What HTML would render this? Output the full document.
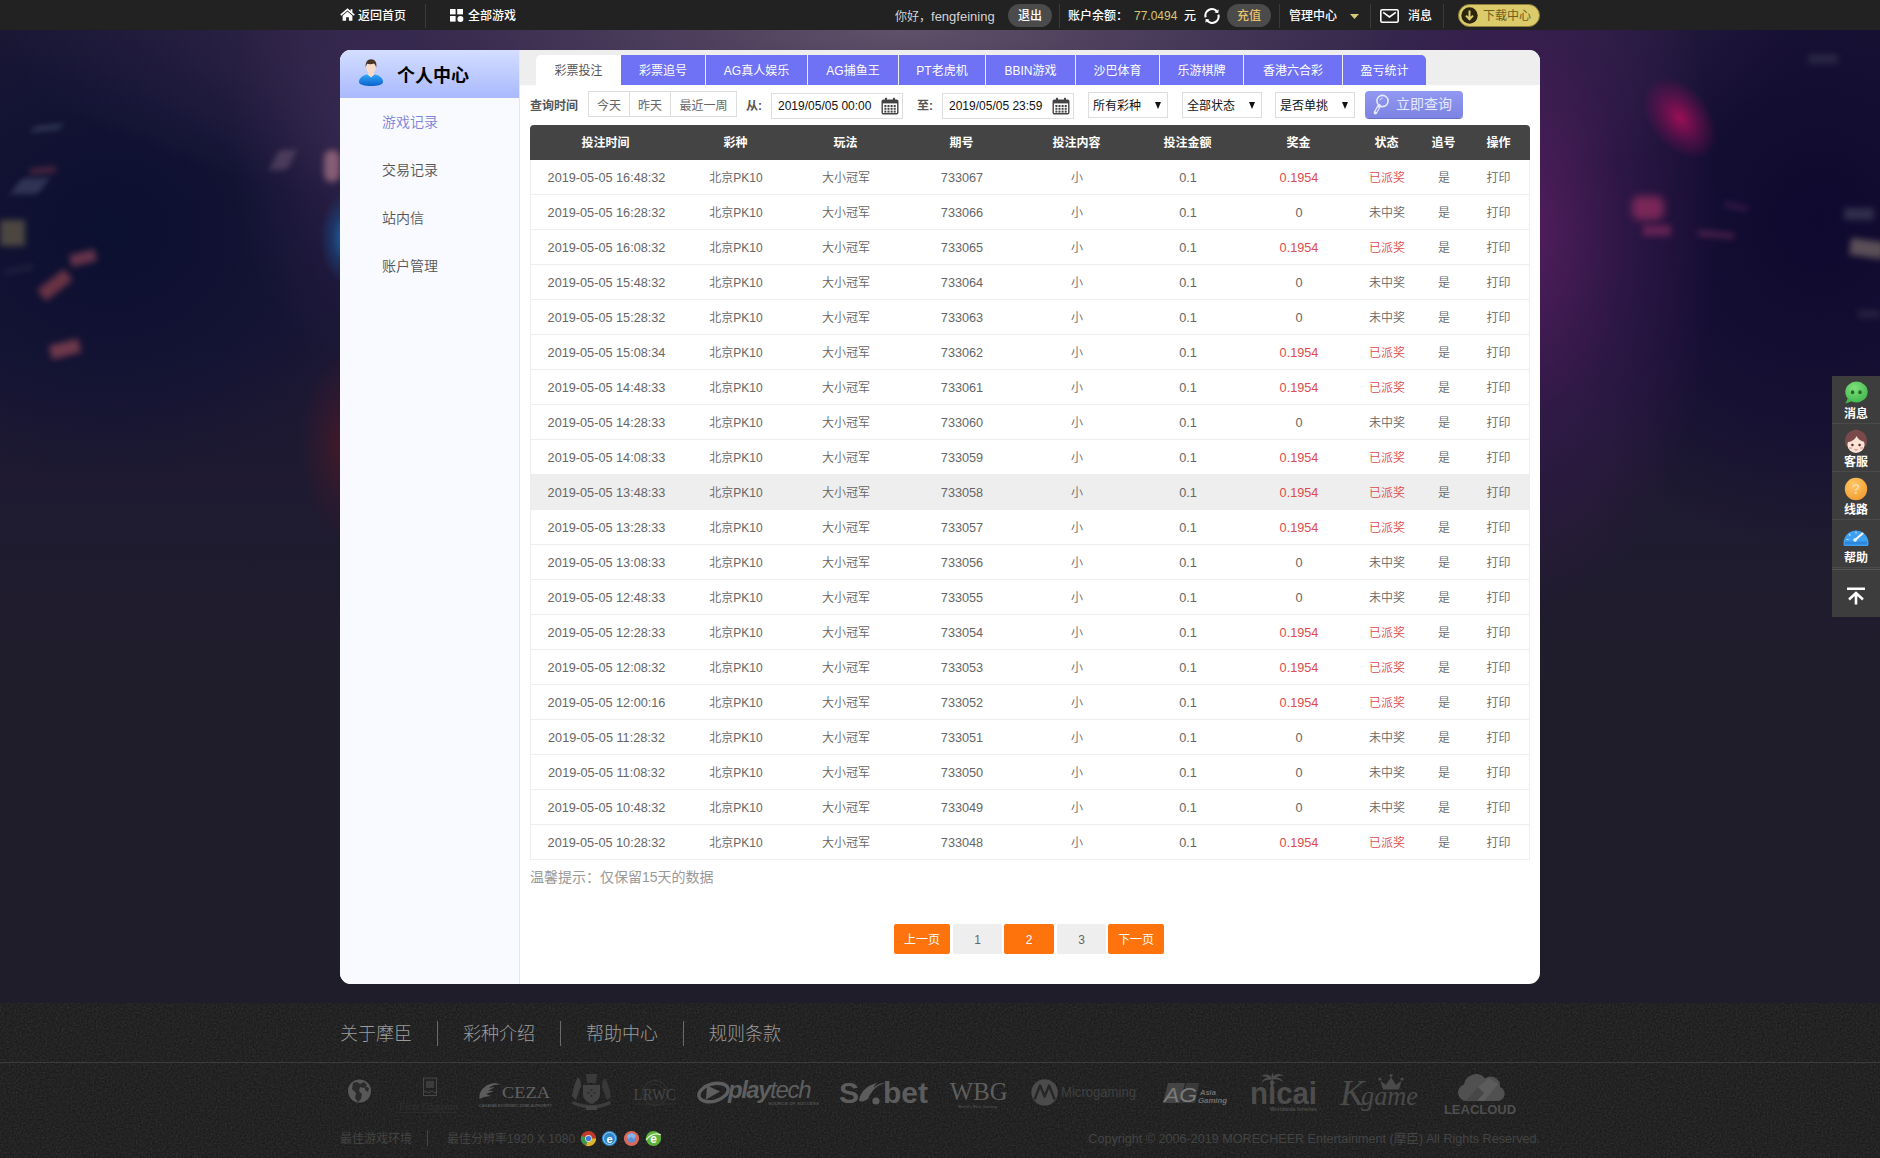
<!DOCTYPE html>
<html lang="zh-CN">
<head>
<meta charset="utf-8">
<title>个人中心</title>
<style>
*{box-sizing:border-box;margin:0;padding:0}
html,body{width:1880px;height:1158px;overflow:hidden}
body{position:relative;background:#201d2b;font-family:"Liberation Sans","Noto Sans CJK SC",sans-serif;font-size:12px;color:#666}
a{text-decoration:none;color:inherit}
ul{list-style:none}
#bg{position:absolute;left:0;top:30px;width:1880px;height:973px;overflow:hidden;
background:
radial-gradient(ellipse 26px 46px at 346px 208px,rgba(30,120,190,.85),rgba(25,90,160,.4) 55%,rgba(20,60,120,0) 100%),
radial-gradient(ellipse 46px 95px at 345px 415px,rgba(85,25,36,.7),rgba(75,25,40,.32) 55%,rgba(60,20,40,0) 100%),

radial-gradient(ellipse 190px 380px at 1530px 200px,rgba(84,30,94,.95),rgba(62,26,84,.55) 50%,rgba(40,20,60,0) 100%),
radial-gradient(ellipse 900px 220px at 900px 0px,rgba(100,84,108,.95),rgba(70,52,94,.55) 55%,rgba(40,30,60,0) 100%),
radial-gradient(ellipse 120px 220px at 350px 110px,rgba(58,42,84,.6),rgba(50,36,78,.3) 55%,rgba(40,30,60,0) 100%),
radial-gradient(ellipse 290px 250px at 110px 200px,rgba(10,15,48,.95),rgba(13,16,50,.55) 60%,rgba(20,20,50,0) 100%),
radial-gradient(ellipse 300px 330px at 1820px 190px,rgba(14,8,46,.95),rgba(18,11,50,.6) 60%,rgba(22,18,50,0) 100%),
linear-gradient(#1d1835 0,#1c1735 300px,#1f1b2f 520px,#201d2b 660px,#201d2b 100%)}
#bg i{position:absolute;display:block;filter:blur(3px);opacity:.6}
#top{position:absolute;left:0;top:0;width:1880px;height:30px;background:#222;color:#fff}
#top .t{position:absolute;top:0;height:30px;line-height:33px;white-space:nowrap;font-size:12px;font-weight:500}
#main{position:absolute;left:340px;top:50px;width:1200px;height:934px;background:#fff;border-radius:11px;overflow:hidden}
#side{position:absolute;left:0;top:0;width:180px;height:934px;background:#f8faff;border-right:1px solid #e4e7f0}
#side .hd{height:48px;background:linear-gradient(#d3deff,#a9b9fd)}
#side .hd b{position:absolute;left:57px;top:13px;font-size:18px;line-height:26px;color:#000;letter-spacing:0}
#side li{position:absolute;left:42px;font-size:14px;line-height:20px;color:#555;font-weight:350}
#side li.on{color:#7b84da}
#content{position:absolute;left:180px;top:0;width:1020px;height:934px}
#tabs{position:absolute;left:0;top:0;width:1020px;height:35px;background:#eee}
#tabs a{position:absolute;top:5px;height:30px;line-height:32px;text-align:center;font-size:12px;color:#fff;background:#6f72f4}
#tabs a.on{background:#fff;color:#555;border-radius:5px 0 0 0}
#tabs a.last{border-radius:0 5px 0 0}
#top .dv{position:absolute;top:4px;width:1px;height:24px;background:#3a3a3a}
#top .pill{position:absolute;top:4px;height:23px;line-height:24px;font-weight:500;border-radius:12px;background:#4b4b4b;text-align:center;font-size:12px}
#top .dl{position:absolute;left:1458px;top:4px;width:82px;height:23px;border-radius:12px;background:#dccb6a;border:1px solid #8d7f3a;color:#6d5f20;font-size:12px;line-height:23px;padding-left:24px;white-space:nowrap}
#flt{position:absolute;left:0;top:35px;width:1020px;height:90px;color:#333}
#flt b{position:absolute;top:6px;height:28px;line-height:31px;font-size:12px;font-weight:700;color:#555;white-space:nowrap}
#flt .grp{position:absolute;left:68px;top:6px;height:26px;border:1px solid #ddd;white-space:nowrap;font-size:0}
#flt .grp span{display:inline-block;height:24px;line-height:29px;vertical-align:top;text-align:center;font-size:12px;color:#666;border-right:1px solid #ddd}
#flt .inp{position:absolute;top:8px;width:132px;height:26px;border:1px solid #ddd;line-height:24px;padding-left:6px;font-size:12px;color:#111;white-space:nowrap}
#flt .inp .cal{position:absolute;right:3px;top:3px}
#flt .sel{position:absolute;top:7px;width:80px;height:26px;border:1px solid #ddd;line-height:26px;padding-left:4px;font-size:12px;color:#111;white-space:nowrap}
#flt .sel i{position:absolute;right:6px;top:9px;border:3.5px solid transparent;border-top:7px solid #111;border-bottom:0}
#flt .btn{position:absolute;left:845px;top:6px;width:98px;height:27px;border-radius:4px;background:linear-gradient(#9299f1,#7d83e2);box-shadow:0 1px 0 #6a6fc8;color:#e6e8ff;font-size:14px;line-height:27px;padding-left:31px;white-space:nowrap}
#tb{position:absolute;left:10px;top:75px;width:1000px;table-layout:fixed;border-collapse:separate;border-spacing:0}
#tb th{height:35px;line-height:33px;padding-top:2px;padding-left:1px;background:#444;color:#fff;font-size:12px;font-weight:bold;text-align:center}
#tb th:first-child{border-radius:4px 0 0 0}
#tb th:last-child{border-radius:0 4px 0 0}
#tb td{font-weight:350;height:35px;line-height:32px;padding-top:2px;border-bottom:1px solid #eee;text-align:center;font-size:12px;color:#666;white-space:nowrap;padding-left:2px}
#tb td.n{font-size:12.7px}
#tb td.r{color:#dd4b4b}
#tb td:first-child{border-left:1px solid #eee}
#tb td:last-child{border-right:1px solid #eee}
#tb tr.hv td{background:#eee}
#hint{position:absolute;left:10px;top:817px;font-size:14px;line-height:20px;color:#999}
#pg a{position:absolute;top:874px;height:30px;line-height:32px;text-align:center;font-size:12px;color:#666;background:#eee;border-radius:2px}
#pg a.o{background:#ff730d;color:#fff}
#footer{position:absolute;left:0;top:1003px;width:1880px;height:155px;background:#161616}
#footer .lk a{position:absolute;top:18px;font-size:18px;line-height:26px;color:#9c9c9c;font-weight:300;white-space:nowrap}
#footer .lk i{position:absolute;top:18px;width:1px;height:25px;background:#6a6a6a}
#footer .hr{position:absolute;left:0;top:59px;width:1880px;height:1px;background:#3b3b3b}
#footer .bt span{position:absolute;top:127px;font-size:12px;line-height:18px;color:#444;white-space:nowrap}
#footer .bt i{position:absolute;top:127px;width:1px;height:16px;background:#444}
#wd{position:absolute;left:1832px;top:376px;width:48px;height:241px;background:#3d3d3d}
#wd .it{position:absolute;left:0;width:48px;height:48px;border-bottom:1px solid #4a4a4a;text-align:center}
#wd .it svg{display:block;margin:5px auto 0}
#wd .it span{position:absolute;left:0;top:29px;width:48px;font-size:12px;line-height:18px;color:#fff;font-weight:bold}
#wd .up{position:absolute;left:0;top:193px;width:48px;height:48px;background:#3d3d3d;border-top:1px solid #555}
#wd .up svg{display:block;margin:17px auto 0}
</style>
</head>
<body>
<svg width="0" height="0" style="position:absolute"><defs><g id="cal"><rect x="1.2" y="3.2" width="15.6" height="13.6" rx="1.2" fill="#fff" stroke="#444" stroke-width="1.4"/><rect x="1.2" y="3.2" width="15.6" height="3.2" fill="#444"/><rect x="4" y="0.8" width="2" height="4.4" rx=".6" fill="#444"/><rect x="12" y="0.8" width="2" height="4.4" rx=".6" fill="#444"/><g fill="#444"><rect x="3.4" y="8" width="2" height="2"/><rect x="6.5" y="8" width="2" height="2"/><rect x="9.6" y="8" width="2" height="2"/><rect x="12.7" y="8" width="2" height="2"/><rect x="3.4" y="10.8" width="2" height="2"/><rect x="6.5" y="10.8" width="2" height="2"/><rect x="9.6" y="10.8" width="2" height="2"/><rect x="12.7" y="10.8" width="2" height="2"/><rect x="3.4" y="13.6" width="2" height="2"/><rect x="6.5" y="13.6" width="2" height="2"/><rect x="9.6" y="13.6" width="2" height="2"/><rect x="12.7" y="13.6" width="2" height="2"/></g></g></defs></svg>
<div id="bg">
<i style="left:1634px;top:50px;width:92px;height:76px;opacity:1;filter:none;transform:rotate(52deg);background:radial-gradient(ellipse 46px 30px at 50% 50%,rgba(165,14,88,.9),rgba(140,15,86,.45) 55%,rgba(110,15,84,0) 100%)"></i>
<i style="left:33px;top:96px;width:28px;height:4px;background:#56667a;transform:skewX(-20deg) rotate(-6deg)"></i>
<i style="left:30px;top:138px;width:26px;height:5px;background:#8a3a4c;transform:rotate(-5deg)"></i>
<i style="left:16px;top:148px;width:28px;height:16px;background:#454b6c;transform:skewX(-35deg)"></i>
<i style="left:0;top:190px;width:25px;height:26px;background:#756a4c;filter:blur(3px)"></i>
<i style="left:70px;top:222px;width:26px;height:12px;background:#a04a5c;transform:rotate(-14deg)"></i>
<i style="left:38px;top:248px;width:34px;height:14px;background:#a54a52;transform:rotate(-38deg)"></i>
<i style="left:4px;top:238px;width:30px;height:3px;background:#3a3a55;transform:rotate(-12deg)"></i>
<i style="left:50px;top:312px;width:30px;height:14px;background:#aa525c;transform:rotate(-14deg)"></i>
<i style="left:274px;top:120px;width:18px;height:20px;background:#65506c;transform:skewX(-25deg)"></i>
<i style="left:324px;top:120px;width:16px;height:32px;background:#c08494;border-radius:8px;filter:blur(3px)"></i>
<i style="left:1632px;top:166px;width:32px;height:24px;background:#b03468;border-radius:8px;filter:blur(4px)"></i>
<i style="left:1643px;top:195px;width:28px;height:11px;background:#8c2c60;filter:blur(3px)"></i>
<i style="left:1698px;top:202px;width:36px;height:5px;background:#7a3062;transform:rotate(5deg)"></i>
<i style="left:1724px;top:174px;width:24px;height:5px;background:#4e2258;transform:rotate(12deg)"></i>
<i style="left:1808px;top:24px;width:30px;height:10px;background:#35344c"></i>
<i style="left:1844px;top:178px;width:30px;height:12px;background:#45465e"></i>
<i style="left:1850px;top:210px;width:34px;height:17px;background:#8c7c72;transform:rotate(8deg);filter:blur(3px)"></i>
<i style="left:1858px;top:280px;width:22px;height:8px;background:#33304a"></i>
</div>
<div id="top">
 <svg style="position:absolute;left:340px;top:8px" width="15" height="13" viewBox="0 0 15 13"><path d="M7.5 0.3 L0.2 6.6 L1.3 7.8 L7.5 2.5 L13.7 7.8 L14.8 6.6 L12.4 4.5 V1.2 H10.6 V3 Z" fill="#fff"/><path d="M7.5 3.6 L2.6 7.8 V12.8 H6.1 V9.2 H8.9 V12.8 H12.4 V7.8 Z" fill="#fff"/></svg>
 <span class="t" style="left:358px">返回首页</span>
 <i class="dv" style="left:425px"></i>
 <svg style="position:absolute;left:450px;top:9px" width="14" height="13" viewBox="0 0 14 13"><rect x="0" y="0" width="5.6" height="5.4" fill="#fff"/><rect x="7.2" y="0" width="5.8" height="5.4" fill="#fff"/><rect x="0" y="7" width="5.6" height="5.6" fill="#fff"/><circle cx="10.4" cy="9.9" r="3" fill="#fff"/></svg>
 <span class="t" style="left:468px">全部游戏</span>
 <span class="t" style="left:895px;color:#d4d4d4;font-weight:400">你好，<span style="font-size:13px">fengfeining</span></span>
 <span class="pill" style="left:1008px;width:44px;color:#fff">退出</span>
 <i class="dv" style="left:1059px"></i>
 <span class="t" style="left:1068px">账户余额：</span>
 <span class="t" style="left:1134px;color:#d9c873">77.0494</span>
 <span class="t" style="left:1184px">元</span>
 <svg style="position:absolute;left:1203px;top:7px" width="18" height="18" viewBox="0 0 16 16" fill="none" stroke="#fff" stroke-width="1.9"><path d="M2.3 9.2 A5.8 5.8 0 0 1 12.6 4.3"/><path d="M13.7 6.8 A5.8 5.8 0 0 1 3.4 11.7"/><path d="M10.2 4.9 L13.6 5.3 L13.9 1.9 Z" fill="#fff" stroke="none"/><path d="M5.8 11.1 L2.4 10.7 L2.1 14.1 Z" fill="#fff" stroke="none"/></svg>
 <span class="pill" style="left:1227px;width:44px;color:#e9c46b">充值</span>
 <i class="dv" style="left:1279px"></i>
 <span class="t" style="left:1289px">管理中心</span>
 <svg style="position:absolute;left:1350px;top:14px" width="9" height="5" viewBox="0 0 9 5"><path d="M0 0H9L4.5 5Z" fill="#d9c873"/></svg>
 <i class="dv" style="left:1370px"></i>
 <svg style="position:absolute;left:1380px;top:9px" width="19" height="14" viewBox="0 0 19 14" fill="none" stroke="#fff" stroke-width="1.6"><rect x="0.8" y="0.8" width="17.4" height="12.4" rx="1.5"/><path d="M3.2 3.4 L9.5 8 L15.8 3.4"/></svg>
 <span class="t" style="left:1408px">消息</span>
 <i class="dv" style="left:1443px"></i>
 <span class="dl"><svg style="position:absolute;left:2px;top:2px" width="17" height="17" viewBox="0 0 17 17"><circle cx="8.5" cy="8.5" r="8.2" fill="#2b2510"/><path d="M8.5 3.6 V11.6 M5 8.6 L8.5 12.2 L12 8.6" fill="none" stroke="#dccb6a" stroke-width="2"/></svg>下载中心</span>
</div>
<div id="main">
 <div id="side">
  <div class="hd"><svg style="position:absolute;left:18px;top:8px" width="26" height="29" viewBox="0 0 26 29"><defs><linearGradient id="bb" x1="0" y1="0" x2="0" y2="1"><stop offset="0" stop-color="#33a6f5"/><stop offset="1" stop-color="#0a62cf"/></linearGradient></defs><path d="M1 24c0-5 5-7 8-7.600h8c3 .600 8 2.600 8 7.600 0 2.600-5.500 4-12 4S1 26.600 1 24z" fill="url(#bb)"/><path d="M9.500 16.400l3.500 3 3.500-3-1-2h-5z" fill="#f6dcc8"/><ellipse cx="13" cy="9.600" rx="4.800" ry="6" fill="#f6dcc8"/><path d="M7.800 9.500c-.800-5 1.600-8.300 5.400-8.300 3.600 0 6 3 5 8.300-.500-2-1.300-3.200-2.200-4-2 .800-5 .800-6.800.300-.700.900-1.100 2-1.400 3.700z" fill="#4a3326"/></svg><b>个人中心</b></div>
  <ul>
   <li class="on" style="top:62px">游戏记录</li>
   <li style="top:110px">交易记录</li>
   <li style="top:158px">站内信</li>
   <li style="top:206px">账户管理</li>
  </ul>
 </div>
 <div id="content">
  <div id="tabs">
   <a class="on" style="left:16px;width:85px">彩票投注</a>
   <a style="left:101px;width:84px">彩票追号</a>
   <a style="left:186px;width:101px">AG真人娱乐</a>
   <a style="left:288px;width:90px">AG捕鱼王</a>
   <a style="left:379px;width:86px">PT老虎机</a>
   <a style="left:466px;width:89px">BBIN游戏</a>
   <a style="left:556px;width:83px">沙巴体育</a>
   <a style="left:640px;width:83px">乐游棋牌</a>
   <a style="left:724px;width:98px">香港六合彩</a>
   <a class="last" style="left:823px;width:83px">盈亏统计</a>
  </div>

  <div id="flt">
   <b style="left:10px">查询时间</b>
   <div class="grp"><span style="width:41px">今天</span><span style="width:41px">昨天</span><span style="width:65px;border-right:0">最近一周</span></div>
   <b style="left:226px">从:</b>
   <div class="inp" style="left:251px">2019/05/05 00:00<svg class="cal" width="18" height="18" viewBox="0 0 18 18"><use href="#cal"/></svg></div>
   <b style="left:397px">至:</b>
   <div class="inp" style="left:422px">2019/05/05 23:59<svg class="cal" width="18" height="18" viewBox="0 0 18 18"><use href="#cal"/></svg></div>
   <div class="sel" style="left:568px">所有彩种<i></i></div>
   <div class="sel" style="left:662px">全部状态<i></i></div>
   <div class="sel" style="left:755px">是否单挑<i></i></div>
   <div class="btn"><svg width="18" height="22" viewBox="0 0 18 22" style="position:absolute;left:7px;top:3px"><circle cx="10.5" cy="7" r="5.6" fill="none" stroke="#e6e8ff" stroke-width="1.6"/><path d="M8 6.2 A3 3 0 0 1 10.5 4.2" fill="none" stroke="#e6e8ff" stroke-width="1"/><path d="M7.2 11.8 L3.4 18.6" stroke="#e6e8ff" stroke-width="3.6" stroke-linecap="round"/><path d="M6.2 13.9 L4.2 17.4" stroke="#8d93ea" stroke-width="1.2" stroke-linecap="round"/></svg>立即查询</div>
  </div>
  <table id="tb" cellspacing="0" cellpadding="0">
   <colgroup><col style="width:150px"><col style="width:110px"><col style="width:110px"><col style="width:122px"><col style="width:108px"><col style="width:114px"><col style="width:108px"><col style="width:68px"><col style="width:46px"><col style="width:64px"></colgroup>
   <thead><tr><th>投注时间</th><th>彩种</th><th>玩法</th><th>期号</th><th>投注内容</th><th>投注金额</th><th>奖金</th><th>状态</th><th>追号</th><th>操作</th></tr></thead>
   <tbody>
<tr><td class="n">2019-05-05 16:48:32</td><td>北京PK10</td><td>大小冠军</td><td class="n">733067</td><td>小</td><td class="n">0.1</td><td class="n r">0.1954</td><td class="r">已派奖</td><td>是</td><td>打印</td></tr>
<tr><td class="n">2019-05-05 16:28:32</td><td>北京PK10</td><td>大小冠军</td><td class="n">733066</td><td>小</td><td class="n">0.1</td><td class="n">0</td><td>未中奖</td><td>是</td><td>打印</td></tr>
<tr><td class="n">2019-05-05 16:08:32</td><td>北京PK10</td><td>大小冠军</td><td class="n">733065</td><td>小</td><td class="n">0.1</td><td class="n r">0.1954</td><td class="r">已派奖</td><td>是</td><td>打印</td></tr>
<tr><td class="n">2019-05-05 15:48:32</td><td>北京PK10</td><td>大小冠军</td><td class="n">733064</td><td>小</td><td class="n">0.1</td><td class="n">0</td><td>未中奖</td><td>是</td><td>打印</td></tr>
<tr><td class="n">2019-05-05 15:28:32</td><td>北京PK10</td><td>大小冠军</td><td class="n">733063</td><td>小</td><td class="n">0.1</td><td class="n">0</td><td>未中奖</td><td>是</td><td>打印</td></tr>
<tr><td class="n">2019-05-05 15:08:34</td><td>北京PK10</td><td>大小冠军</td><td class="n">733062</td><td>小</td><td class="n">0.1</td><td class="n r">0.1954</td><td class="r">已派奖</td><td>是</td><td>打印</td></tr>
<tr><td class="n">2019-05-05 14:48:33</td><td>北京PK10</td><td>大小冠军</td><td class="n">733061</td><td>小</td><td class="n">0.1</td><td class="n r">0.1954</td><td class="r">已派奖</td><td>是</td><td>打印</td></tr>
<tr><td class="n">2019-05-05 14:28:33</td><td>北京PK10</td><td>大小冠军</td><td class="n">733060</td><td>小</td><td class="n">0.1</td><td class="n">0</td><td>未中奖</td><td>是</td><td>打印</td></tr>
<tr><td class="n">2019-05-05 14:08:33</td><td>北京PK10</td><td>大小冠军</td><td class="n">733059</td><td>小</td><td class="n">0.1</td><td class="n r">0.1954</td><td class="r">已派奖</td><td>是</td><td>打印</td></tr>
<tr class="hv"><td class="n">2019-05-05 13:48:33</td><td>北京PK10</td><td>大小冠军</td><td class="n">733058</td><td>小</td><td class="n">0.1</td><td class="n r">0.1954</td><td class="r">已派奖</td><td>是</td><td>打印</td></tr>
<tr><td class="n">2019-05-05 13:28:33</td><td>北京PK10</td><td>大小冠军</td><td class="n">733057</td><td>小</td><td class="n">0.1</td><td class="n r">0.1954</td><td class="r">已派奖</td><td>是</td><td>打印</td></tr>
<tr><td class="n">2019-05-05 13:08:33</td><td>北京PK10</td><td>大小冠军</td><td class="n">733056</td><td>小</td><td class="n">0.1</td><td class="n">0</td><td>未中奖</td><td>是</td><td>打印</td></tr>
<tr><td class="n">2019-05-05 12:48:33</td><td>北京PK10</td><td>大小冠军</td><td class="n">733055</td><td>小</td><td class="n">0.1</td><td class="n">0</td><td>未中奖</td><td>是</td><td>打印</td></tr>
<tr><td class="n">2019-05-05 12:28:33</td><td>北京PK10</td><td>大小冠军</td><td class="n">733054</td><td>小</td><td class="n">0.1</td><td class="n r">0.1954</td><td class="r">已派奖</td><td>是</td><td>打印</td></tr>
<tr><td class="n">2019-05-05 12:08:32</td><td>北京PK10</td><td>大小冠军</td><td class="n">733053</td><td>小</td><td class="n">0.1</td><td class="n r">0.1954</td><td class="r">已派奖</td><td>是</td><td>打印</td></tr>
<tr><td class="n">2019-05-05 12:00:16</td><td>北京PK10</td><td>大小冠军</td><td class="n">733052</td><td>小</td><td class="n">0.1</td><td class="n r">0.1954</td><td class="r">已派奖</td><td>是</td><td>打印</td></tr>
<tr><td class="n">2019-05-05 11:28:32</td><td>北京PK10</td><td>大小冠军</td><td class="n">733051</td><td>小</td><td class="n">0.1</td><td class="n">0</td><td>未中奖</td><td>是</td><td>打印</td></tr>
<tr><td class="n">2019-05-05 11:08:32</td><td>北京PK10</td><td>大小冠军</td><td class="n">733050</td><td>小</td><td class="n">0.1</td><td class="n">0</td><td>未中奖</td><td>是</td><td>打印</td></tr>
<tr><td class="n">2019-05-05 10:48:32</td><td>北京PK10</td><td>大小冠军</td><td class="n">733049</td><td>小</td><td class="n">0.1</td><td class="n">0</td><td>未中奖</td><td>是</td><td>打印</td></tr>
<tr><td class="n">2019-05-05 10:28:32</td><td>北京PK10</td><td>大小冠军</td><td class="n">733048</td><td>小</td><td class="n">0.1</td><td class="n r">0.1954</td><td class="r">已派奖</td><td>是</td><td>打印</td></tr>
   </tbody>
  </table>
  <div id="hint">温馨提示：仅保留15天的数据</div>
  <div id="pg"><a class="o" style="left:374px;width:56px">上一页</a><a style="left:433px;width:49px">1</a><a class="o" style="left:484px;width:50px">2</a><a style="left:537px;width:49px">3</a><a class="o" style="left:588px;width:56px">下一页</a></div>
 </div>
</div>
<div id="wd">
 <div class="it" style="top:0"><svg width="26" height="24" viewBox="0 0 26 24"><defs><radialGradient id="gg" cx=".4" cy=".3" r=".8"><stop offset="0" stop-color="#7fe07a"/><stop offset="1" stop-color="#3db54a"/></radialGradient></defs><ellipse cx="13.5" cy="11" rx="11.2" ry="10.4" fill="url(#gg)"/><path d="M5 17l-2.600 5.400 7-2.400z" fill="#45ba50"/><ellipse cx="9.6" cy="11.2" rx="1.700" ry="2" fill="#1f6a2a"/><ellipse cx="17" cy="11.2" rx="1.700" ry="2" fill="#1f6a2a"/></svg><span>消息</span></div>
 <div class="it" style="top:48px"><svg width="26" height="26" viewBox="0 0 26 26"><path d="M13 1c7 0 11 5 11 11 0 3-1 5-2 6H4c-1-1-2-3-2-6C2 6 6 1 13 1z" fill="#7a4a4a"/><circle cx="13" cy="3.600" r="3" fill="#7a4a4a"/><ellipse cx="13" cy="15.500" rx="8.600" ry="8.400" fill="#fbe3d6"/><path d="M4.600 13c3 0 7-2 9-6 1 3 4 5 8 6-1-6-4-9-8.600-9s-8 3-8.400 9z" fill="#7a4a4a"/><circle cx="9.400" cy="16" r="1.300" fill="#5a3030"/><circle cx="16.600" cy="16" r="1.300" fill="#5a3030"/><ellipse cx="7.400" cy="19" rx="1.800" ry="1.100" fill="#f5a9a0"/><ellipse cx="18.600" cy="19" rx="1.800" ry="1.100" fill="#f5a9a0"/><path d="M11 20.500q2 1.800 4 0" fill="#e0605a"/></svg><span>客服</span></div>
 <div class="it" style="top:96px"><svg width="26" height="24" viewBox="0 0 26 24"><defs><radialGradient id="og" cx=".4" cy=".3" r=".8"><stop offset="0" stop-color="#ffc766"/><stop offset="1" stop-color="#f29a2e"/></radialGradient></defs><circle cx="13" cy="12" r="11.200" fill="url(#og)"/><text x="13" y="17" font-family="Liberation Sans,sans-serif" font-weight="bold" font-size="14" text-anchor="middle" fill="#f7d9a0">?</text></svg><span>线路</span></div>
 <div class="it" style="top:144px"><svg width="28" height="22" viewBox="0 0 28 22"><path d="M1.500 18a12.500 12.500 0 0 1 25 0v1.500a1.500 1.500 0 0 1-1.500 1.500H3a1.500 1.500 0 0 1-1.500-1.500z" fill="#3fa0f0"/><path d="M3 16.500h22v3H3z" fill="#2d88dc"/><path d="M13 15l7.500-6.500" stroke="#fff" stroke-width="2" stroke-linecap="round"/><circle cx="13" cy="15" r="1.800" fill="#e9f4ff"/><g stroke="#bfe0ff" stroke-width="1.200"><path d="M14 6.500v2M7 9l1.300 1.500M4.500 14.500h2"/></g></svg><span>帮助</span></div>
 <div class="up"><svg width="20" height="18" viewBox="0 0 20 18" fill="none" stroke="#fff" stroke-width="2.600"><path d="M1 1.800h18M10 6.500V17.500M3 12.500L10 6l7 6.500"/></svg></div>
</div>
<div id="footer">
 <svg width="1880" height="155" style="position:absolute;left:0;top:0;opacity:.16"><filter id="nz"><feTurbulence type="fractalNoise" baseFrequency=".55" numOctaves="2" seed="3"/><feColorMatrix type="saturate" values="0"/></filter><rect width="1880" height="155" filter="url(#nz)"/></svg>
 <div class="lk"><a style="left:340px">关于摩臣</a><i style="left:437px"></i><a style="left:463px">彩种介绍</a><i style="left:560px"></i><a style="left:586px">帮助中心</a><i style="left:683px"></i><a style="left:709px">规则条款</a></div>
 <div class="hr"></div>
 <svg id="logos" width="1200" height="50" viewBox="0 0 1200 50" style="position:absolute;left:340px;top:69px" fill="#555">
  <g><circle cx="19.5" cy="19" r="17" fill="none" stroke="#2a2a2a" stroke-width="4" stroke-dasharray="1 2.200"/><circle cx="19.500" cy="19" r="11.500" fill="#585858"/><path d="M13 11l4-1 3 2 4-2 3 3-3 3-4-1-1 4 3 3-1 5-3 3-3-4 1-5-4-4z" fill="#2b2b2b"/><path d="M25 14l4 2-1 4-3-2z" fill="#2b2b2b"/></g>
  <g><rect x="83.500" y="6" width="13" height="17.500" fill="none" stroke="#474747" stroke-width="1"/><rect x="86" y="9" width="8" height="7" fill="#3c3c3c"/><path d="M84 20q1.600-2 3.200 0t3.200 0 3.200 0 3.200 0" fill="none" stroke="#474747" stroke-width="1"/><text x="59" y="38" font-family="Liberation Serif,serif" font-style="italic" font-size="9.500" textLength="59" lengthAdjust="spacingAndGlyphs" fill="#323232">First Cagayan</text><path d="M59 40.500h59" stroke="#2d2d2d" stroke-width=".8"/></g>
  <g><path d="M139.500 27c-1-8 5-15 15-16 3 0 5 1 5.500 2-4-1-8 0-11 3l6-1-7 4 6 0-8 3 5 2-7 1z" fill="#5c5c5c"/><text x="162" y="26.400" font-family="Liberation Serif,serif" font-size="17.500" textLength="48" lengthAdjust="spacingAndGlyphs" fill="#626262">CEZA</text><text x="139" y="35.300" font-family="Liberation Sans,sans-serif" font-size="4.200" font-weight="bold" textLength="73" lengthAdjust="spacingAndGlyphs" fill="#585858">CAGAYAN ECONOMIC ZONE AUTHORITY</text></g>
  <g fill="#454545" opacity=".8"><path d="M243 13h17v9c0 5-4 8-8.500 10-4.500-2-8.500-5-8.500-10z" fill="#4a4a4a"/><path d="M246 2h11l-1 9h-9z" fill="#404040"/><path d="M238 5c-3 5-5 12-6 19l4 4 5-14c0-4-1-7-3-9z" fill="#484848"/><path d="M265 6c3 5 5 12 6 19l-4 3-5-13c0-4 1-7 3-9z" fill="#3e3e3e"/><path d="M233 29q18 8 37 0l1 3q-19 9-39 0z" fill="#444"/><rect x="246" y="34" width="11" height="4" fill="#4c4c4c"/><g fill="#2b2b2b"><circle cx="251.500" cy="18" r="1"/><circle cx="248.500" cy="21" r="1"/><circle cx="254.500" cy="21" r="1"/><circle cx="251.500" cy="24" r="1"/></g></g>
  <g><circle cx="315" cy="21" r="12.500" fill="none" stroke="#363636" stroke-width="1"/><circle cx="315" cy="21" r="9" fill="none" stroke="#303030" stroke-width="1"/><text x="293.600" y="28" font-family="Liberation Serif,serif" font-size="16.500" textLength="42.400" lengthAdjust="spacingAndGlyphs" fill="#464646">LRWC</text><path d="M294 32h42" stroke="#333" stroke-width=".8"/></g>
  <g fill="#5e5e5e"><ellipse cx="373.500" cy="20.500" rx="15" ry="8.600" transform="rotate(-16 373.500 20.500)" fill="none" stroke="#5e5e5e" stroke-width="3.400"/><path d="M367 13.500l13 6-14 8z"/><text x="388" y="26.300" font-family="Liberation Sans,sans-serif" font-style="italic" font-weight="bold" font-size="24" letter-spacing="-1.500">play<tspan font-weight="normal" letter-spacing="-1.300">tech</tspan></text><text x="428" y="32.500" font-family="Liberation Sans,sans-serif" font-size="4" font-weight="bold" textLength="51" lengthAdjust="spacingAndGlyphs" fill="#505050">SOURCE OF SUCCESS</text></g>
  <g fill="#5c5c5c"><text x="499" y="31.400" font-family="Liberation Sans,sans-serif" font-weight="bold" font-size="30">S</text><path d="M519 29c1-9 8-16 18-18-2 2-3 3-3 5 2-3 6-5 11-5-8 2-14 8-17 16-3 2-6 3-9 2z"/><circle cx="536" cy="29" r="3.600"/><text x="543" y="31.400" font-family="Liberation Sans,sans-serif" font-weight="bold" font-size="30" textLength="45" lengthAdjust="spacingAndGlyphs">bet</text></g>
  <g><text x="609.800" y="27.800" font-family="Liberation Serif,serif" font-size="26" textLength="57.700" lengthAdjust="spacingAndGlyphs" fill="#5e5e5e">WBG</text><text x="618" y="35.600" font-family="Liberation Sans,sans-serif" font-size="4.400" font-weight="bold" textLength="38.800" lengthAdjust="spacingAndGlyphs" fill="#4a4a4a">World's Best Gaming</text></g>
  <g><circle cx="704.600" cy="20.400" r="13.200" fill="#4b4b4b"/><path d="M694.500 27.500l5.600-14 4.500 11 4.500-11 5.600 14" fill="none" stroke="#262626" stroke-width="2.400" stroke-linejoin="round"/><text x="721" y="25" font-family="Liberation Sans,sans-serif" font-size="14" textLength="75" lengthAdjust="spacingAndGlyphs" fill="#404040">Microgaming</text></g>
  <g><path d="M828 11h17l-5 20h-17z" fill="#454545"/><path d="M846 11h13l-4 20h-14z" fill="#3a3a3a"/><text x="824" y="30" font-family="Liberation Sans,sans-serif" font-style="italic" font-size="21" textLength="33" lengthAdjust="spacingAndGlyphs" fill="#7a7a7a">AG</text><text x="860" y="23" font-family="Liberation Sans,sans-serif" font-weight="bold" font-style="italic" font-size="7.500" fill="#707070">Asia</text><text x="858" y="30.600" font-family="Liberation Sans,sans-serif" font-weight="bold" font-style="italic" font-size="7.500" textLength="29" lengthAdjust="spacingAndGlyphs" fill="#707070">Gaming</text></g>
  <g fill="#4d4d4d"><text x="910" y="31.700" font-family="Liberation Sans,sans-serif" font-weight="bold" font-size="32" textLength="67" lengthAdjust="spacingAndGlyphs">nicai</text><path d="M930.500 15c0-4 .500-7 1.500-9 1 2 1.500 5 1.500 9zM932 6c-3-4-8-4.500-11-1.500 3-.500 5 0 7 1.500-3 0-5.500 1.500-6.500 5 2.500-3 6-4 10.500-3zM932 6c3-4.500 8-5 11.500-2-3-.500-5.500 0-7.500 1.500 3.500 0 6 1.500 7 5-2.500-3-6-4-11-3zM932 6.500c-1-2.500-.500-4.500 1-5.500 .500 2 .300 3.500-.200 5.500z"/><text x="930" y="39.300" font-family="Liberation Sans,sans-serif" font-weight="bold" font-size="5.400" textLength="46.800" lengthAdjust="spacingAndGlyphs">Worldwide lotteries</text></g>
  <g fill="#4a4a4a"><text x="1000" y="33" font-family="Liberation Serif,serif" font-style="italic" font-size="36" textLength="24" lengthAdjust="spacingAndGlyphs">K</text><text x="1021" y="32.600" font-family="Liberation Serif,serif" font-style="italic" font-size="27" textLength="57" lengthAdjust="spacingAndGlyphs">game</text><path d="M1043 17.500l-2.500-9 5.500 4.500 5-8 5 8 5.500-4.500-2.500 9z"/><circle cx="1040" cy="7" r="1.600"/><circle cx="1051" cy="3.500" r="1.600"/><circle cx="1062" cy="7" r="1.600"/></g>
  <g><path d="M1126 29a8.500 8.500 0 0 1-2-16.600 12 12 0 0 1 21-6 9.500 9.500 0 0 1 15 8.500 7.300 7.300 0 0 1-3 14.100z" fill="#505050"/><path d="M1138 15l11-9 9 6-14 17h-12z" fill="#5c5c5c"/><path d="M1126 29l12-14 6 6-7 8z" fill="#474747"/><text x="1140" y="41.800" font-family="Liberation Sans,sans-serif" font-weight="bold" font-size="13" text-anchor="middle" fill="#4f4f4f">LEACLOUD</text></g>
 </svg>
 <div class="bt"><span style="left:340px">最佳游戏环境</span><i style="left:427px"></i><span style="left:447px">最佳分辨率1920 X 1080</span>
  <svg style="position:absolute;left:580px;top:127px" width="84" height="17" viewBox="0 0 84 17">
   <g><circle cx="8.5" cy="8.5" r="7.6" fill="#c23a2b"/><path d="M8.5 8.5L1.4 5.7A7.6 7.6 0 0 0 6 15.7z" fill="#3a9a4a"/><path d="M8.5 8.5L6 15.7A7.6 7.6 0 0 0 16.1 8.5z" fill="#d9b52e"/><circle cx="8.5" cy="8.5" r="3.4" fill="#ddd"/><circle cx="8.5" cy="8.5" r="2.6" fill="#3b7ad9"/></g>
   <g><circle cx="29.5" cy="8.5" r="7.6" fill="#2f86c9"/><circle cx="29.5" cy="8.5" r="6" fill="none" stroke="#8fd0f5" stroke-width="1"/><text x="29.5" y="12.6" font-family="Liberation Sans,sans-serif" font-weight="bold" font-size="11" text-anchor="middle" fill="#fff">e</text></g>
   <g><circle cx="51.5" cy="8.5" r="7.6" fill="#d86a5a"/><circle cx="51.5" cy="8" r="4.6" fill="#5b8fd6"/><path d="M47 6a5 5 0 0 1 9 0l-2 3-3-2-3 2z" fill="#86b4ea"/></g>
   <g><circle cx="73.500" cy="8.5" r="7.6" fill="#5db33a"/><text x="73.500" y="12.8" font-family="Liberation Sans,sans-serif" font-weight="bold" font-size="12" text-anchor="middle" fill="#fff">e</text><path d="M66 10q7-9 15-5" fill="none" stroke="#e8f7d8" stroke-width="1.2"/></g>
  </svg>
  <span style="right:340px;font-size:12.6px">Copyright © 2006-2019 MORECHEER Entertainment (摩臣) All Rights Reserved.</span></div>
</div>
</body>
</html>
